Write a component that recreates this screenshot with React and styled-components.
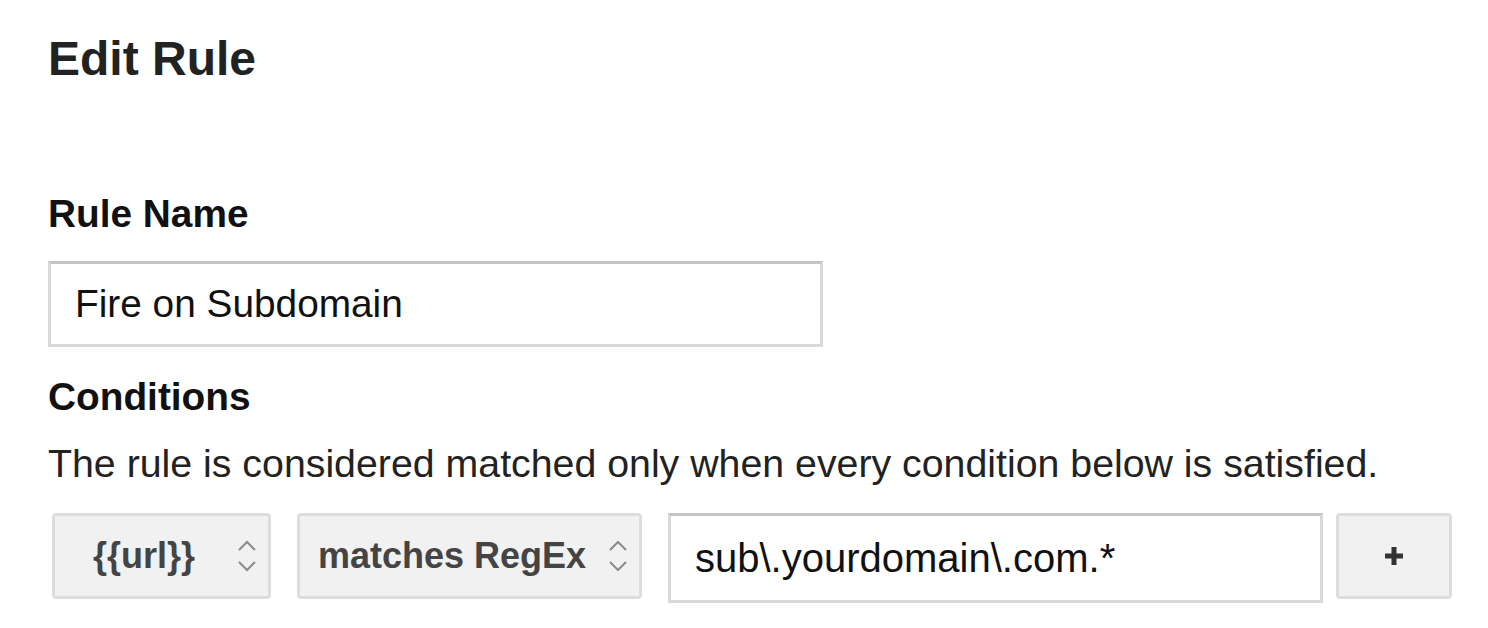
import styled, { createGlobalStyle } from "styled-components";

const GlobalStyle = createGlobalStyle`
    body{
        margin: 0;
        background: #ffffff;
        font-family: "Liberation Sans", Arial, sans-serif;
        color: #222222;
    }
`

export default function App(){
    return (
        <Page>
            <GlobalStyle />
            <Title>Edit Rule</Title>
            <Label>Rule Name</Label>
            <NameInput>Fire on Subdomain</NameInput>
            <Label $top={28}>Conditions</Label>
            <Hint>The rule is considered matched only when every condition below is satisfied.</Hint>
            <ConditionRow>
                <Select $width={219}>
                    <span>{"{{url}}"}</span>
                    <Chevrons />
                </Select>
                <Select $width={345}>
                    <span>matches RegEx</span>
                    <Chevrons />
                </Select>
                <ValueInput>sub\.yourdomain\.com.*</ValueInput>
                <AddButton>
                    <svg width="22" height="22" viewBox="0 0 22 22">
                        <path d="M11 2v18M2 11h18" stroke="#333333" strokeWidth="5" />
                    </svg>
                </AddButton>
            </ConditionRow>
        </Page>
    )
}

function Chevrons(){
    return (
        <ChevronBox>
            <svg width="20" height="36" viewBox="0 0 20 36">
                <path d="M2 12l8-8 8 8" fill="none" stroke="#8a8a8a" strokeWidth="2" />
                <path d="M2 24l8 8 8-8" fill="none" stroke="#8a8a8a" strokeWidth="2" />
            </svg>
        </ChevronBox>
    )
}

const Page = styled.div`
    padding: 31px 0 0 48px;
`
const Title = styled.h1`
    margin: 0;
    font-size: 48px;
    line-height: 56px;
    font-weight: 700;
    color: #222222;
`
const Label = styled.h2`
    margin: ${props => props.$top || 105}px 0 0 0;
    font-size: 38.8px;
    line-height: 44px;
    font-weight: 700;
    color: #111111;
`
const NameInput = styled.div`
    margin-top: 25px;
    width: 775px;
    height: 86px;
    box-sizing: border-box;
    border: 3px solid #d9d9d9;
    border-top-color: #c4c4c4;
    padding-left: 24px;
    display: flex;
    align-items: center;
    font-size: 38.8px;
    color: #111111;
`
const Hint = styled.p`
    margin: 21px 0 0 0;
    font-size: 39.3px;
    line-height: 46px;
    color: #222222;
`
const ConditionRow = styled.div`
    margin-top: 27px;
    display: flex;
    align-items: flex-start;
    padding-left: 4px;
`
const Select = styled.div`
    width: ${props => props.$width}px;
    height: 86px;
    box-sizing: border-box;
    margin-right: 26px;
    background: #f1f1f1;
    border: 3px solid #dddddd;
    border-radius: 4px;
    display: flex;
    align-items: center;
    font-size: 36px;
    font-weight: 700;
    color: #444444;
    span{
        flex: 1;
        text-align: center;
        white-space: nowrap;
    }
`
const ChevronBox = styled.div`
    display: flex;
    align-items: center;
    margin: 0 11px 0 4px;
`
const ValueInput = styled.div`
    width: 655px;
    height: 90px;
    box-sizing: border-box;
    border: 3px solid #d9d9d9;
    border-top-color: #c4c4c4;
    padding-left: 24px;
    display: flex;
    align-items: center;
    font-size: 40px;
    color: #111111;
    margin-right: 13px;
`
const AddButton = styled.div`
    width: 116px;
    height: 86px;
    box-sizing: border-box;
    background: #f1f1f1;
    border: 3px solid #dddddd;
    border-radius: 4px;
    display: flex;
    align-items: center;
    justify-content: center;
`
